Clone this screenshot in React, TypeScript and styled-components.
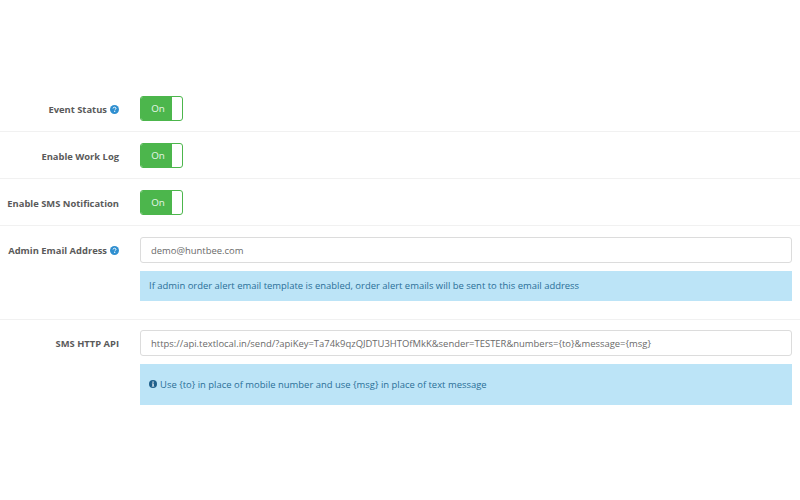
import React from "react";
import styled, { createGlobalStyle } from "styled-components";

const Global = createGlobalStyle`
  html, body { margin: 0; padding: 0; background: #fff; }
  body { font-family: "Open Sans", "Liberation Sans", sans-serif; font-size: 9.4px; color: #666; }
`;

const Page = styled.div`
  width: 800px;
  height: 500px;
  padding-top: 85px;
  box-sizing: border-box;
  overflow: hidden;
`;

const Row = styled.div`
  display: grid;
  grid-template-columns: 140px 1fr;
  padding: 11px 8px 10px 0;
  border-bottom: 1px solid #f1f1f1;
  &:last-child {
    border-bottom: 0;
    padding-top: 10px;
  }
`;

const Label = styled.label`
  display: flex;
  align-items: center;
  justify-content: flex-end;
  height: 25px;
  box-sizing: border-box;
  padding: 1px 21px 0 0;
  font-weight: 700;
  font-size: 9.4px;
  color: #5a5a5a;
  white-space: nowrap;
  gap: 3px;
`;

const Content = styled.div`
  display: flex;
  flex-direction: column;
  gap: 8px;
  min-width: 0;
`;

const Switch = styled.div`
  display: flex;
  width: 43px;
  height: 25px;
  box-sizing: border-box;
  border: 1px solid #4cb64c;
  border-radius: 3px;
  overflow: hidden;
  background: #fff;
`;

const SwitchOn = styled.span`
  width: 31px;
  box-sizing: border-box;
  padding-left: 3px;
  background: #4cb64c;
  color: #e8f6e8;
  font-size: 9.8px;
  display: flex;
  align-items: center;
  justify-content: center;
`;

const Input = styled.input`
  display: block;
  width: 100%;
  height: 26px;
  box-sizing: border-box;
  padding: 0 10px;
  border: 1px solid #dcdcdc;
  border-radius: 3px;
  background: #fff;
  color: #6a6a6a;
  font: 400 9.45px "Open Sans", "Liberation Sans", sans-serif;
  outline: none;
`;

const Alert = styled.div<{ $height: number }>`
  display: flex;
  align-items: center;
  height: ${(p) => p.$height}px;
  margin-bottom: 8px;
  box-sizing: border-box;
  padding: 0 9px 1px;
  background: #bce4f7;
  color: #2a6f97;
  font-size: 9.45px;
  gap: 3px;
  white-space: nowrap;
`;

const HelpSvg = styled.svg`
  flex: none;
  width: 9px;
  height: 9px;
`;

const InfoSvg = styled.svg`
  flex: none;
  width: 8px;
  height: 8px;
`;

const HelpIcon = () => (
  <HelpSvg viewBox="0 0 16 16" aria-hidden="true">
    <circle cx="8" cy="8" r="8" fill="#2f8fd0" />
    <path d="M5.4 6.2C5.5 4.7 6.6 3.9 8 3.9c1.5 0 2.6.9 2.6 2.1 0 1-.6 1.5-1.3 2-.6.4-.8.7-.8 1.3" fill="none" stroke="#fff" strokeWidth="1.7" />
    <rect x="7.4" y="10.4" width="1.9" height="1.9" fill="#fff" />
  </HelpSvg>
);

const InfoIcon = () => (
  <InfoSvg viewBox="0 0 16 16" aria-hidden="true">
    <circle cx="8" cy="8" r="8" fill="#1f5f8b" />
    <rect x="6.8" y="3" width="2.6" height="2.4" fill="#fff" />
    <path d="M5.8 6.8h3.6v5h1.2v1.4H5.6v-1.4h1.2V8.2h-1z" fill="#fff" />
  </InfoSvg>
);

const Toggle = () => (
  <Switch>
    <SwitchOn>On</SwitchOn>
  </Switch>
);

export default function App() {
  return (
    <Page>
      <Global />
      <Row>
        <Label>Event Status <HelpIcon /></Label>
        <Content><Toggle /></Content>
      </Row>
      <Row>
        <Label>Enable Work Log</Label>
        <Content><Toggle /></Content>
      </Row>
      <Row>
        <Label>Enable SMS Notification</Label>
        <Content><Toggle /></Content>
      </Row>
      <Row>
        <Label>Admin Email Address <HelpIcon /></Label>
        <Content>
          <Input readOnly value="demo@huntbee.com" />
          <Alert $height={30}>If admin order alert email template is enabled, order alert emails will be sent to this email address</Alert>
        </Content>
      </Row>
      <Row>
        <Label>SMS HTTP API</Label>
        <Content>
          <Input readOnly value="https://api.textlocal.in/send/?apiKey=Ta74k9qzQJDTU3HTOfMkK&sender=TESTER&numbers={to}&message={msg}" />
          <Alert $height={41}><InfoIcon /> Use {"{to}"} in place of mobile number and use {"{msg}"} in place of text message</Alert>
        </Content>
      </Row>
    </Page>
  );
}
